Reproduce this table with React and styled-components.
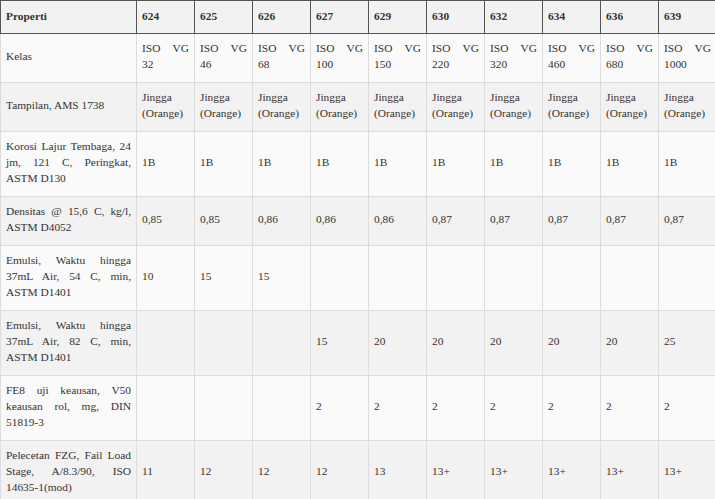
import React from 'react'
import styled, { createGlobalStyle } from 'styled-components'

const GlobalStyle = createGlobalStyle`
  html, body {
    margin: 0;
    padding: 0;
    background: #fff;
    overflow: hidden;
  }
`

const Table = styled.table`
  border-collapse: collapse;
  table-layout: fixed;
  width: 716px;
  font-family: "Liberation Serif", "Times New Roman", serif;
  font-size: 11.4px;
  line-height: 16px;
  color: #333;
`

const HeadCell = styled.th`
  background: #f2f2f2;
  border: 1px solid #555;
  padding: 7px 5px 9px;
  text-align: left;
  font-weight: bold;
  width: ${props => props.wide ? '125px' : '47px'};
`

const Row = styled.tr`
  background: ${props => props.even ? '#f2f2f2' : '#fafafa'};
`

const Cell = styled.td`
  border: 1px solid #ddd;
  padding: 6px 5px 10px;
  text-align: justify;
  vertical-align: middle;
`

const codes = ['624', '625', '626', '627', '629', '630', '632', '634', '636', '639']

const rows = [
  { label: 'Kelas', values: ['ISO VG 32', 'ISO VG 46', 'ISO VG 68', 'ISO VG 100', 'ISO VG 150', 'ISO VG 220', 'ISO VG 320', 'ISO VG 460', 'ISO VG 680', 'ISO VG 1000'] },
  { label: 'Tampilan, AMS 1738', values: Array(10).fill('Jingga (Orange)') },
  { label: 'Korosi Lajur Tembaga, 24 jm, 121 C, Peringkat, ASTM D130', values: Array(10).fill('1B') },
  { label: 'Densitas @ 15,6 C, kg/l, ASTM D4052', values: ['0,85', '0,85', '0,86', '0,86', '0,86', '0,87', '0,87', '0,87', '0,87', '0,87'] },
  { label: 'Emulsi, Waktu hingga 37mL Air, 54 C, min, ASTM D1401', values: ['10', '15', '15', '', '', '', '', '', '', ''] },
  { label: 'Emulsi, Waktu hingga 37mL Air, 82 C, min, ASTM D1401', values: ['', '', '', '15', '20', '20', '20', '20', '20', '25'] },
  { label: 'FE8 uji keausan, V50 keausan rol, mg, DIN 51819-3', values: ['', '', '', '2', '2', '2', '2', '2', '2', '2'] },
  { label: 'Pelecetan FZG, Fail Load Stage, A/8.3/90, ISO 14635-1(mod)', values: ['11', '12', '12', '12', '13', '13+', '13+', '13+', '13+', '13+'] },
]

export default function App() {
  return (
    <>
      <GlobalStyle />
      <Table>
        <thead>
          <tr>
            <HeadCell wide>Properti</HeadCell>
            {codes.map(c => <HeadCell key={c}>{c}</HeadCell>)}
          </tr>
        </thead>
        <tbody>
          {rows.map((r, i) => (
            <Row key={i} even={i % 2 === 1}>
              <Cell>{r.label}</Cell>
              {r.values.map((v, j) => <Cell key={j}>{v}</Cell>)}
            </Row>
          ))}
        </tbody>
      </Table>
    </>
  )
}
